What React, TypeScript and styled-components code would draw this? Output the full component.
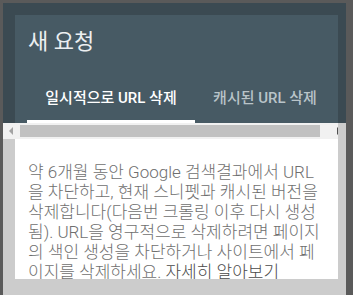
import React from "react";
import styled, { createGlobalStyle } from "styled-components";

const GlobalStyle = createGlobalStyle`
  html, body {
    margin: 0;
    padding: 0;
    background: #5a5a5a;
    overflow: hidden;
  }
  body {
    font-family: Roboto, "Noto Sans CJK KR", sans-serif;
  }
`;

const Page = () => {
  return (
    <>
      <GlobalStyle />
      <Backdrop>
        <Dialog>
          <HeaderFrame>
            <Header>
              <Title>새 요청</Title>
              <Tabs>
                <Tab active>일시적으로 URL 삭제</Tab>
                <Tab>캐시된 URL 삭제</Tab>
              </Tabs>
            </Header>
          </HeaderFrame>

          <ScrollRow>
            <Track>
              <Arrow dir="left" />
              <Thumb />
              <Arrow dir="right" />
            </Track>
            <Filler />
          </ScrollRow>

          <BodyFrame>
            <Content>
              <Text>
                약 6개월 동안 Google 검색결과에서 URL을 차단하고, 현재 스니펫과 캐시된
                버전을 삭제합니다(다음번 크롤링 이후 다시 생성됨). URL을 영구적으로
                삭제하려면 페이지의 색인 생성을 차단하거나 사이트에서 페이지를
                삭제하세요. <MoreLink href="#">자세히 알아보기</MoreLink>
              </Text>
            </Content>
          </BodyFrame>
        </Dialog>
      </Backdrop>
    </>
  );
};

export default Page;

// =================================================================

const Backdrop = styled.div`
  width: 353px;
  height: 295px;
  padding: 3px 7px 0 3px;
  box-sizing: border-box;
`;

const Dialog = styled.div`
  width: 343px;
  height: 292px;
  display: flex;
  flex-direction: column;
  background: #cccccc;
  overflow: hidden;
`;

const HeaderFrame = styled.div`
  background: #3b4a52;
  padding: 12px 8px 0 12px;
`;

const Header = styled.div`
  background: #475a64;
  height: 108px;
  display: flex;
  flex-direction: column;
`;

const Title = styled.h1`
  margin: 0;
  padding: 12px 0 0 13px;
  height: 47px;
  box-sizing: border-box;
  font-family: Roboto, "Noto Sans CJK KR", sans-serif;
  font-size: 22px;
  font-weight: 400;
  line-height: 30px;
  color: #eceff1;
`;

const Tabs = styled.div`
  display: flex;
  margin-top: auto;
  padding-left: 12px;
`;

const Tab = styled.div<{ active?: boolean }>`
  height: 48px;
  width: ${(p) => (p.active ? "168px" : "140px")};
  flex: none;
  display: flex;
  align-items: center;
  justify-content: center;
  box-sizing: border-box;
  padding-bottom: 2px;
  font-family: Roboto, "Noto Sans CJK KR", sans-serif;
  font-size: 15px;
  font-weight: 500;
  white-space: nowrap;
  color: ${(p) => (p.active ? "#ffffff" : "#b9c4c9")};
  border-bottom: 3px solid ${(p) => (p.active ? "#ffffff" : "transparent")};
`;

const ScrollRow = styled.div`
  display: flex;
  height: 16px;
`;

const Track = styled.div`
  flex: 1;
  background: #f1f1f1;
  display: flex;
  align-items: center;
`;

const Arrow = styled.span<{ dir: "left" | "right" }>`
  width: 0;
  height: 0;
  border-top: 4px solid transparent;
  border-bottom: 4px solid transparent;
  ${(p) =>
    p.dir === "left"
      ? "border-right: 4px solid #a3a3a3; margin: 0 0 0 6px;"
      : "border-left: 4px solid #505050; margin: 0 -3px 0 17px;"}
`;

const Thumb = styled.div`
  width: 300px;
  height: 12px;
  margin-left: 7px;
  background: #c1c1c1;
`;

const Filler = styled.div`
  width: 8px;
  background: #cccccc;
`;

const BodyFrame = styled.div`
  padding: 0 8px 0 12px;
  background: #cccccc;
  height: 140px;
  box-sizing: border-box;
`;

const Content = styled.div`
  background: #ffffff;
  height: 140px;
  overflow: hidden;
  padding: 23px 12px 0 13px;
  box-sizing: border-box;
`;

const Text = styled.p`
  margin: 0;
  font-family: Roboto, "Noto Sans CJK KR", sans-serif;
  font-size: 17px;
  font-weight: 300;
  line-height: 20px;
  color: #6f6f6f;
`;

const MoreLink = styled.a`
  color: #4a4a4a;
  text-decoration: underline;
`;
